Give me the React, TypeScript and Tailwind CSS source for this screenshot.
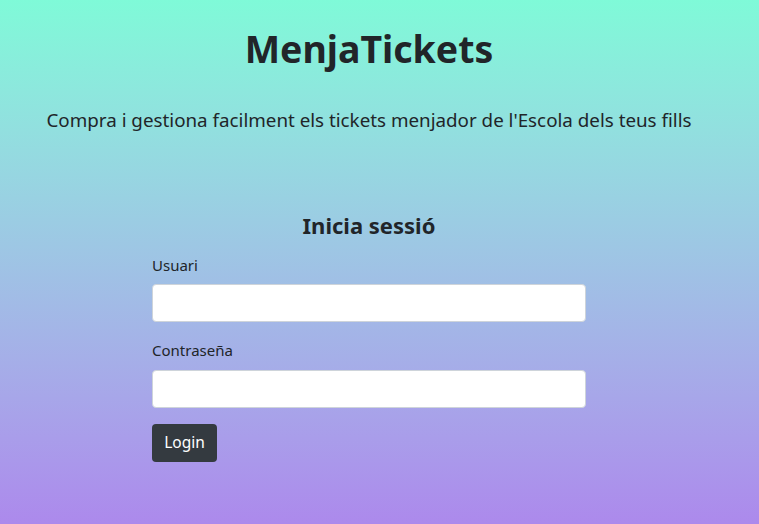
import React from "react";

export default function App() {
  return (
    <div
      className="w-[759px] h-[524px] overflow-hidden bg-gradient-to-b from-[#7ffad8] to-[#ac89ec] text-[#212529]"
      style={{ fontFamily: '"Noto Sans", "Open Sans", sans-serif' }}
    >
      <div className="w-[738px] flex flex-col items-center">
        <h1 className="mt-[25px] text-[37.5px] leading-[48px] font-bold">MenjaTickets</h1>
        <p className="mt-[33px] text-[18.8px] leading-[28px]">
          Compra i gestiona facilment els tickets menjador de l'Escola dels teus fills
        </p>
        <h2 className="mt-[77px] text-[22px] leading-[28px] font-bold">Inicia sessió</h2>
        <div className="w-[434px] mt-[14px] flex flex-col">
          <label className="text-[15px] leading-[24px]">Usuari</label>
          <input className="mt-[7px] h-[38px] w-full rounded-[4px] border border-[#ced4da] bg-white" />
          <label className="mt-[16px] text-[15px] leading-[24px]">Contraseña</label>
          <input type="password" className="mt-[8px] h-[38px] w-full rounded-[4px] border border-[#ced4da] bg-white" />
          <button className="mt-[16px] self-start h-[38px] w-[65px] rounded-[4px] bg-[#343a40] text-white text-[15.5px]">
            Login
          </button>
        </div>
      </div>
    </div>
  );
}
